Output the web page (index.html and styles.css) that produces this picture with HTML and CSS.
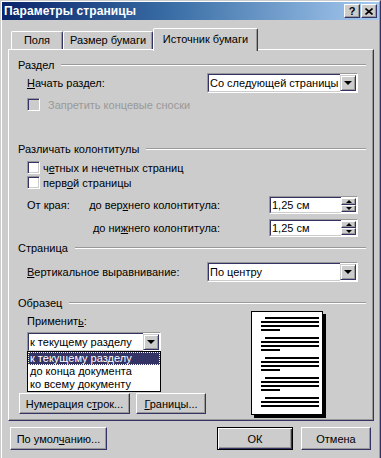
FILE: index.html
```html
<!DOCTYPE html>
<html>
<head>
    <title>Параметры страницы</title>
    <link rel="stylesheet" href="styles.css">
</head>
<body>
    <div class="window">
        <div class="frame">
            <div class="titlebar">
                <span class="title">Параметры страницы</span>
                <span class="tbtn help">?</span>
                <span class="tbtn close">
                    <svg width="8" height="7" viewBox="0 0 8 7"><path d="M0.5 0.5 L7.5 6.5 M7.5 0.5 L0.5 6.5" stroke="#000" stroke-width="1.6"/></svg>
                </span>
            </div>

            <div class="dialog">
                <div class="tabs">
                    <div class="tab tab-fields">Поля</div>
                    <div class="tab tab-size">Размер бумаги</div>
                    <div class="tab tab-source active">Источник бумаги</div>
                </div>

                <div class="panel">
                    <div class="group-head">Раздел</div>
                    <div class="row first">
                        <span><u>Н</u>ачать раздел:</span>
                        <div class="select">
                            <div class="select-inner">Со следующей страницы</div>
                            <span class="drop-btn"><i class="arrow-down"></i></span>
                        </div>
                    </div>
                    <div class="row check-row disabled-row">
                        <span class="check disabled"></span>
                        <span class="check-text">Запретить концевые сноски</span>
                    </div>

                    <div class="group-head head-headers">Различать колонтитулы</div>
                    <div class="row check-row first-check">
                        <span class="check"></span>
                        <span>ч<u>е</u>тных и нечетных страниц</span>
                    </div>
                    <div class="row check-row second-check">
                        <span class="check"></span>
                        <span>перв<u>о</u>й страницы</span>
                    </div>
                    <div class="row spin-row top-spin">
                        <span class="edge">От края:</span>
                        <span class="spin-label">до вер<u>х</u>него колонтитула:</span>
                        <div class="spin">
                            <div class="spin-inner">1,25 см</div>
                            <div class="spin-btns">
                                <span class="spin-btn"><i class="arrow-up"></i></span>
                                <span class="spin-btn"><i class="arrow-small-down"></i></span>
                            </div>
                        </div>
                    </div>
                    <div class="row spin-row bottom-spin">
                        <span class="edge"></span>
                        <span class="spin-label">до ни<u>ж</u>него колонтитула:</span>
                        <div class="spin">
                            <div class="spin-inner">1,25 см</div>
                            <div class="spin-btns">
                                <span class="spin-btn"><i class="arrow-up"></i></span>
                                <span class="spin-btn"><i class="arrow-small-down"></i></span>
                            </div>
                        </div>
                    </div>

                    <div class="group-head head-page">Страница</div>
                    <div class="row align-row">
                        <span><u>В</u>ертикальное выравнивание:</span>
                        <div class="select">
                            <div class="select-inner">По центру</div>
                            <span class="drop-btn"><i class="arrow-down"></i></span>
                        </div>
                    </div>

                    <div class="group-head head-sample">Образец</div>
                    <div class="sample">
                        <div class="apply-col">
                            <div class="apply-label">Применит<u>ь</u>:</div>
                            <div class="combo">
                                <div class="select">
                                    <div class="select-inner">к текущему разделу</div>
                                    <span class="drop-btn"><i class="arrow-down"></i></span>
                                </div>
                                <div class="list">
                                    <div class="list-item selected">к текущему разделу</div>
                                    <div class="list-item">до конца документа</div>
                                    <div class="list-item">ко всему документу</div>
                                </div>
                            </div>
                            <div class="sample-buttons">
                                <button class="btn btn-lines">Нумерация с<u>т</u>рок...</button>
                                <button class="btn btn-borders"><u>Г</u>раницы...</button>
                            </div>
                        </div>
                        <svg class="preview" width="75" height="107" viewBox="0 0 75 107">
                            <rect x="3" y="3" width="72" height="104" fill="#000"/>
                            <rect x="0.5" y="0.5" width="71" height="103" fill="#fff" stroke="#000"/>
                            <g fill="#000">
                                <rect x="14" y="6" width="54" height="2"/>
                                <rect x="10" y="10" width="58" height="2"/>
                                <rect x="10" y="14" width="58" height="2"/>
                                <rect x="10" y="18" width="19" height="2"/>
                                <rect x="14" y="26" width="54" height="2"/>
                                <rect x="10" y="30" width="58" height="2"/>
                                <rect x="10" y="34" width="58" height="2"/>
                                <rect x="10" y="38" width="19" height="2"/>
                                <rect x="14" y="46" width="54" height="2"/>
                                <rect x="10" y="50" width="58" height="2"/>
                                <rect x="10" y="54" width="58" height="2"/>
                                <rect x="10" y="58" width="19" height="2"/>
                                <rect x="14" y="66" width="54" height="2"/>
                                <rect x="10" y="70" width="58" height="2"/>
                                <rect x="10" y="74" width="58" height="2"/>
                                <rect x="10" y="78" width="19" height="2"/>
                                <rect x="14" y="86" width="54" height="2"/>
                                <rect x="10" y="90" width="58" height="2"/>
                                <rect x="10" y="94" width="58" height="2"/>
                            </g>
                        </svg>
                    </div>
                </div>

                <div class="footer">
                    <button class="btn btn-reset">По умол<u>ч</u>анию...</button>
                    <button class="btn btn-default">ОК</button>
                    <button class="btn btn-cancel">Отмена</button>
                </div>
            </div>
        </div>
    </div>
</body>
</html>
```

FILE: styles.css
```css
body {
    margin: 0;
    background-color: #cccccc;
    font-family: "Liberation Sans", Arial, sans-serif;
    font-size: 11px;
    color: #000;
    overflow: hidden;
}

u {
    text-decoration: underline;
    text-underline-offset: 1px;
}

.window {
    width: 381px;
    height: 464px;
    box-sizing: border-box;
    border: 1px solid;
    border-color: #cccccc #333366 #333366 #cccccc;
}

.frame {
    height: 100%;
    box-sizing: border-box;
    border: 1px solid;
    border-color: #ffffff #999999 #999999 #ffffff;
}

/* title bar */

.titlebar {
    height: 18px;
    display: flex;
    align-items: center;
    padding: 0 2px 0 2px;
    background: linear-gradient(to right, #0a246a 0%, #3a6ea5 45%, #a6caf0 100%);
}

.title {
    flex: 1;
    color: #fff;
    font-weight: bold;
    font-size: 12px;
    letter-spacing: 0.1px;
}

.tbtn {
    width: 16px;
    height: 14px;
    box-sizing: border-box;
    display: flex;
    align-items: center;
    justify-content: center;
    background-color: #cccccc;
    border: 1px solid;
    border-color: #ffffff #333366 #333366 #ffffff;
    box-shadow: inset -1px -1px #999999;
    font-weight: bold;
    font-size: 11px;
    line-height: 12px;
}

.close {
    margin-left: 1px;
}

/* tabs */

.dialog {
    padding: 0 6px;
}

.tabs {
    display: flex;
    align-items: flex-end;
    height: 21px;
    margin-top: 8px;
    padding-left: 3px;
    position: relative;
    z-index: 1;
}

.tab {
    height: 18px;
    box-sizing: border-box;
    border: 1px solid;
    border-bottom: none;
    border-color: #ffffff #333366 transparent #ffffff;
    box-shadow: inset -1px 0 #999999;
    border-radius: 2px 2px 0 0;
    text-align: center;
    padding-top: 2px;
    line-height: 13px;
}

.tab.active {
    height: 23px;
    margin-bottom: -2px;
    padding-top: 4px;
    background-color: #cccccc;
}

.tab-fields {
    width: 52px;
}

.tab-size {
    width: 90px;
}

.tab-source {
    width: 105px;
}

/* panel */

.panel {
    width: 366px;
    height: 372px;
    box-sizing: border-box;
    border: 1px solid;
    border-color: #ffffff #333366 #333366 #ffffff;
    box-shadow: inset -1px -1px #999999;
    padding: 8px 7px 0 9px;
}

.group-head {
    display: flex;
    align-items: center;
    height: 14px;
    line-height: 14px;
}

.group-head::after {
    content: "";
    flex: 1;
    border-top: 1px solid #999999;
    border-bottom: 1px solid #ffffff;
    margin-left: 7px;
}

.head-headers {
    margin-top: 31px;
}

.head-page {
    margin-top: 4px;
}

.head-sample {
    margin-top: 14px;
}

.row {
    display: flex;
    align-items: center;
    padding: 0 8px 0 9px;
}

.row.first {
    margin-top: 1px;
}

.disabled-row {
    margin-top: 5px;
    color: #999999;
}

.disabled-row .check-text {
    margin-left: 5px;
}

.first-check {
    margin-top: 5px;
}

.second-check {
    margin-top: 2px;
}

.top-spin {
    margin-top: 7px;
}

.bottom-spin {
    margin-top: 5px;
}

.align-row {
    margin-top: 7px;
}

/* combo box */

.select {
    width: 151px;
    height: 20px;
    box-sizing: border-box;
    margin-left: auto;
    display: flex;
    border: 1px solid;
    border-color: #999999 #ffffff #ffffff #999999;
    background-color: #fff;
}

.select-inner {
    flex: 1;
    display: flex;
    align-items: center;
    padding-left: 1px;
    border: 1px solid;
    border-right: none;
    border-color: #333366 #cccccc #cccccc #333366;
    white-space: nowrap;
    overflow: hidden;
}

.drop-btn {
    width: 16px;
    height: 16px;
    margin-top: 1px;
    margin-right: 1px;
    box-sizing: border-box;
    display: flex;
    align-items: center;
    justify-content: center;
    background-color: #cccccc;
    border: 1px solid;
    border-color: #cccccc #333366 #333366 #cccccc;
    box-shadow: inset 1px 1px #ffffff, inset -1px -1px #999999;
}

.arrow-down {
    width: 0;
    height: 0;
    border-left: 4px solid transparent;
    border-right: 4px solid transparent;
    border-top: 4px solid #000;
}

/* check boxes */

.check {
    width: 13px;
    height: 13px;
    box-sizing: border-box;
    margin-right: 3px;
    border: 1px solid;
    border-color: #999999 #ffffff #ffffff #999999;
    box-shadow: inset 1px 1px #333366, inset -1px -1px #cccccc;
    background-color: #ffffff;
}

.check.disabled {
    background-color: #cccccc;
}

/* spinners */

.edge {
    width: 57px;
}

.spin-label {
    width: 136px;
    text-align: right;
    white-space: nowrap;
}

.spin {
    width: 89px;
    height: 18px;
    box-sizing: border-box;
    margin-left: auto;
    display: flex;
    border: 1px solid;
    border-color: #999999 #ffffff #ffffff #999999;
    background-color: #fff;
}

.spin-inner {
    flex: 1;
    display: flex;
    align-items: center;
    padding-left: 1px;
    border: 1px solid;
    border-right: none;
    border-color: #333366 #cccccc #cccccc #333366;
}

.spin-btns {
    width: 15px;
    display: flex;
    flex-direction: column;
    padding: 1px 1px 1px 0;
}

.spin-btn {
    flex: 1;
    box-sizing: border-box;
    display: flex;
    align-items: center;
    justify-content: center;
    background-color: #cccccc;
    border: 1px solid;
    border-color: #ffffff #333366 #333366 #ffffff;
    box-shadow: inset -1px -1px #999999;
}

.arrow-up {
    width: 0;
    height: 0;
    border-left: 3px solid transparent;
    border-right: 3px solid transparent;
    border-bottom: 3px solid #000;
}

.arrow-small-down {
    width: 0;
    height: 0;
    border-left: 3px solid transparent;
    border-right: 3px solid transparent;
    border-top: 3px solid #000;
}

/* sample */

.sample {
    display: flex;
}

.apply-col {
    width: 188px;
    box-sizing: border-box;
    padding-left: 1px;
}

.apply-label {
    margin: 4px 0 0 8px;
    line-height: 14px;
}

.combo {
    position: relative;
    margin: 4px 0 0 8px;
}

.combo .select {
    width: 134px;
    margin-left: 0;
}

.list {
    position: absolute;
    left: 0;
    top: 19px;
    width: 134px;
    box-sizing: border-box;
    border: 1px solid #000;
    background-color: #fff;
}

.list-item {
    height: 13px;
    line-height: 13px;
    padding-left: 2px;
}

.list-item.selected {
    background-color: #333366;
    color: #fff;
    outline: 1px dotted #ffffcc;
    outline-offset: -1px;
}

.sample-buttons {
    display: flex;
    gap: 6px;
    margin-top: 41px;
}

.preview {
    display: block;
    margin: 1px 0 0 45px;
}

/* buttons */

.btn {
    height: 21px;
    box-sizing: border-box;
    padding: 0;
    font-family: inherit;
    font-size: 11px;
    color: #000;
    background-color: #cccccc;
    border: 1px solid;
    border-color: #ffffff #333366 #333366 #ffffff;
    box-shadow: inset -1px -1px #999999;
    border-radius: 0;
}

.btn-lines {
    width: 111px;
}

.btn-borders {
    width: 70px;
}

.footer {
    display: flex;
    margin-top: 6px;
    padding: 0 2px;
}

.footer .btn {
    height: 23px;
}

.btn-reset {
    width: 97px;
}

.btn-default {
    width: 76px;
    margin-left: auto;
    border-color: #000;
    box-shadow: inset 1px 1px #ffffff, inset -1px -1px #333366, inset -2px -2px #999999;
}

.btn-cancel {
    width: 70px;
    margin-left: 8px;
}
```
